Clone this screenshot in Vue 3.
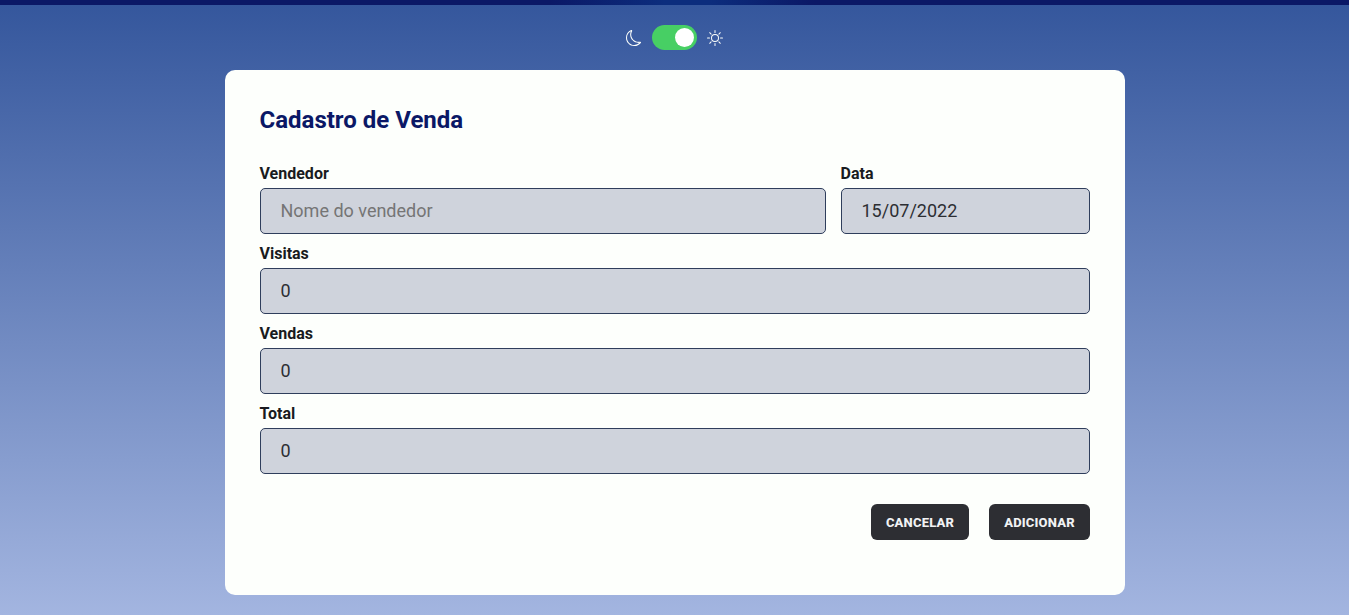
<script setup>
import { ref } from 'vue'

const light = ref(true)
const seller = ref('')
const date = ref('15/07/2022')
const visits = ref('0')
const sales = ref('0')
const total = ref('0')
</script>

<template>
  <div class="page">
    <div class="topbar"></div>
    <div class="theme">
      <svg class="icon" viewBox="0 0 16 16" fill="currentColor">
        <path d="M6 .278a.768.768 0 0 1 .08.858 7.208 7.208 0 0 0-.878 3.46c0 4.021 3.278 7.277 7.318 7.277.527 0 1.04-.055 1.533-.16a.787.787 0 0 1 .81.316.733.733 0 0 1-.031.893A8.349 8.349 0 0 1 8.344 16C3.734 16 0 12.286 0 7.71 0 4.266 2.114 1.312 5.124.06A.752.752 0 0 1 6 .278zM4.858 1.311A7.269 7.269 0 0 0 1.025 7.71c0 4.02 3.279 7.276 7.319 7.276a7.316 7.316 0 0 0 5.205-2.162c-.337.042-.68.063-1.029.063-4.61 0-8.343-3.714-8.343-8.29 0-1.167.242-2.278.681-3.286z" />
      </svg>
      <button class="switch" :class="{ on: light }" aria-label="Tema" @click="light = !light"><span class="knob"></span></button>
      <svg class="icon" viewBox="0 0 16 16" fill="currentColor">
        <path d="M8 11a3 3 0 1 1 0-6 3 3 0 0 1 0 6zm0 1a4 4 0 1 0 0-8 4 4 0 0 0 0 8zM8 0a.5.5 0 0 1 .5.5v2a.5.5 0 0 1-1 0v-2A.5.5 0 0 1 8 0zm0 13a.5.5 0 0 1 .5.5v2a.5.5 0 0 1-1 0v-2A.5.5 0 0 1 8 13zm8-5a.5.5 0 0 1-.5.5h-2a.5.5 0 0 1 0-1h2a.5.5 0 0 1 .5.5zM3 8a.5.5 0 0 1-.5.5h-2a.5.5 0 0 1 0-1h2A.5.5 0 0 1 3 8zm10.657-5.657a.5.5 0 0 1 0 .707l-1.414 1.415a.5.5 0 1 1-.707-.708l1.414-1.414a.5.5 0 0 1 .707 0zm-9.193 9.193a.5.5 0 0 1 0 .707L3.05 13.657a.5.5 0 0 1-.707-.707l1.414-1.414a.5.5 0 0 1 .707 0zm9.193 2.121a.5.5 0 0 1-.707 0l-1.414-1.414a.5.5 0 0 1 .707-.707l1.414 1.414a.5.5 0 0 1 0 .707zM4.464 4.465a.5.5 0 0 1-.707 0L2.343 3.05a.5.5 0 1 1 .707-.707l1.414 1.414a.5.5 0 0 1 0 .708z" />
      </svg>
    </div>
    <form class="card" @submit.prevent>
      <h1>Cadastro de Venda</h1>
      <div class="row">
        <label class="field seller">Vendedor<input v-model="seller" placeholder="Nome do vendedor" /></label>
        <label class="field date">Data<input v-model="date" /></label>
      </div>
      <label class="field">Visitas<input v-model="visits" /></label>
      <label class="field">Vendas<input v-model="sales" /></label>
      <label class="field">Total<input v-model="total" /></label>
      <div class="actions">
        <button type="button" class="btn cancel">CANCELAR</button>
        <button type="submit" class="btn add">ADICIONAR</button>
      </div>
    </form>
  </div>
</template>

<style>
body {
  overflow: hidden;
}
</style>

<style scoped>
* {
  box-sizing: border-box;
}
.page {
  height: 615px;
  display: flex;
  flex-direction: column;
  align-items: center;
  background: linear-gradient(#34569c, #a3b5e0);
  font-family: Roboto, sans-serif;
}
.topbar {
  width: 100%;
  height: 5px;
  flex: none;
  background: linear-gradient(90deg, #0b1866 calc(50% - 125px), #0c2d7d calc(50% - 10px), #0c2d7d calc(50% + 35px), #0b1866 calc(50% + 140px));
}
.theme {
  height: 65px;
  display: flex;
  align-items: center;
  gap: 10px;
  color: #fdfffc;
}
.icon {
  width: 16px;
  height: 16px;
  margin-top: 1px;
}
.switch {
  width: 45px;
  height: 25px;
  padding: 3px;
  border: 0;
  border-radius: 13px;
  background: #8b929e;
  display: flex;
  align-items: center;
}
.switch.on {
  justify-content: flex-end;
  background: #47cf64;
}
.knob {
  width: 19px;
  height: 19px;
  border-radius: 50%;
  background: #fff;
}
.card {
  width: 900px;
  height: 525px;
  padding: 36px 35px 35px;
  border-radius: 10px;
  background: #fdfffc;
}
h1 {
  margin: 0 0 29px;
  font-size: 24px;
  line-height: 28px;
  font-weight: 700;
  color: #0b1866;
}
.row {
  display: flex;
  gap: 15px;
}
.field {
  display: block;
  height: 80px;
  padding-top: 1px;
  font-size: 16px;
  line-height: 19px;
  font-weight: 700;
  color: #191b20;
}
.seller {
  width: 566px;
}
.date {
  width: 249px;
}
input {
  display: block;
  width: 100%;
  height: 46px;
  margin-top: 5px;
  padding: 0 20px 2px;
  border: 1px solid #2f3e5c;
  border-radius: 5px;
  outline: 0;
  background: #cfd3dc;
  font: 400 18px Roboto, sans-serif;
  color: #2d2e33;
}
input::placeholder {
  color: #757575;
}
.actions {
  display: flex;
  justify-content: flex-end;
  gap: 20px;
  margin-top: 21px;
}
.btn {
  height: 36px;
  padding: 0 0 0 1px;
  border: 0;
  border-radius: 6px;
  background: #2d2e33;
  color: #f1f2f4;
  font: 800 13px Roboto, sans-serif;
  letter-spacing: 0.2px;
}
.cancel {
  width: 98px;
}
.add {
  width: 101px;
}
</style>
